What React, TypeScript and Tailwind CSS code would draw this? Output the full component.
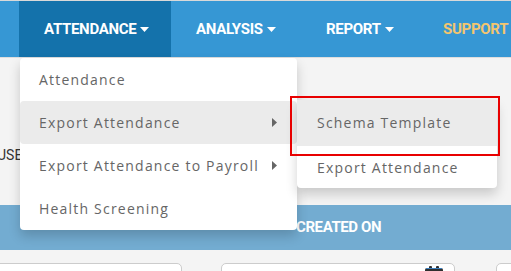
import React from "react";

const navFont = { fontFamily: "Roboto, 'Liberation Sans', sans-serif" };
const menuFont = { fontFamily: "'Open Sans', 'DejaVu Sans', sans-serif" };

function Caret() {
  return (
    <svg width="9" height="5" viewBox="0 0 9 5" className="shrink-0">
      <path d="M0 0h9L4.5 5z" fill="currentColor" />
    </svg>
  );
}

function RightCaret() {
  return (
    <svg width="5" height="9" viewBox="0 0 5 9" className="shrink-0">
      <path d="M0 0l5 4.5L0 9z" fill="currentColor" />
    </svg>
  );
}

const tabs = [
  { label: "ATTENDANCE", w: "w-[152px]", active: true },
  { label: "ANALYSIS", w: "w-[130px]" },
  { label: "REPORT", w: "w-[117px]" },
  { label: "SUPPORT", w: "w-[120px]", gold: true },
];

export default function App() {
  return (
    <div className="relative w-[511px] h-[271px] overflow-hidden bg-[#f4f4f4]">
      {/* Top nav */}
      <div className="h-[57px] border-t border-[#d9d9d9] bg-[#3697d4] flex pl-[19px]" style={navFont}>
        {tabs.map((t) => (
          <div
            key={t.label}
            className={`${t.w} shrink-0 h-full flex items-center gap-[4px] px-[25px] text-[15px] font-bold tracking-[-0.3px] ${
              t.active ? "bg-[#1472ab] text-white" : t.gold ? "text-[#f3c56f]" : "text-white"
            }`}
          >
            <span>{t.label}</span>
            <Caret />
          </div>
        ))}
      </div>
      <div className="h-px bg-[#dedede]" />

      {/* Page body behind the menu */}
      <div className="h-[147px] pt-[90px] text-[14px] leading-none text-[#333]" style={navFont}>
        <span className="-ml-[3px] inline-block">USER</span>
      </div>

      {/* Table header */}
      <div
        className="h-[45px] bg-[#73acd1] flex items-center pl-[296px] text-white text-[15px] font-bold tracking-[-0.4px]"
        style={navFont}
      >
        CREATED ON
      </div>

      {/* Filter inputs */}
      <div className="flex gap-[39px] pt-[13px] -ml-[10px]">
        <div className="w-[192px] h-[34px] shrink-0 rounded-[5px] border border-[#cccccc] bg-white" />
        <div className="w-[234px] h-[34px] shrink-0 rounded-[5px] border border-[#cccccc] bg-white flex justify-end pr-[11px] pt-[2px]">
          <svg width="18" height="16" viewBox="0 0 18 16">
            <rect x="0" y="2" width="18" height="14" rx="2" fill="#2f2f2f" />
            <rect x="4" y="0" width="3" height="4" rx="1" fill="#2f2f2f" />
            <rect x="11" y="0" width="3" height="4" rx="1" fill="#2f2f2f" />
            <rect x="1" y="2" width="16" height="1" fill="#3a7fc0" />
          </svg>
        </div>
        <div className="w-[80px] h-[34px] shrink-0 ml-[2px] rounded-[5px] border border-[#cccccc] bg-white" />
      </div>

      {/* Attendance dropdown */}
      <div
        className="absolute left-[20px] top-[58px] w-[277px] bg-white rounded-[4px] shadow-[0_6px_12px_rgba(0,0,0,0.18)] text-[14px] text-[#666] tracking-[1.2px]"
        style={menuFont}
      >
        <div className="h-[43px] flex items-center pl-[19px]">Attendance</div>
        <div className="h-[43px] flex items-center justify-between pl-[19px] pr-[20px] bg-[#ebebeb] rounded-[4px]">
          <span>Export Attendance</span>
          <RightCaret />
        </div>
        <div className="h-[43px] flex items-center justify-between pl-[19px] pr-[20px]">
          <span>Export Attendance to Payroll</span>
          <RightCaret />
        </div>
        <div className="h-[43px] flex items-center pl-[19px]">Health Screening</div>
      </div>

      {/* Export Attendance submenu */}
      <div
        className="absolute left-[297px] top-[100px] w-[200px] bg-white rounded-[4px] shadow-[0_6px_12px_rgba(0,0,0,0.18)] text-[14px] text-[#666] tracking-[1.2px]"
        style={menuFont}
      >
        <div className="h-[46px] flex items-center pl-[20px] pb-[1px] bg-[#ebebeb]">Schema Template</div>
        <div className="h-[42px] flex items-center pl-[20px]">Export Attendance</div>
      </div>

      {/* Highlight box */}
      <div className="absolute left-[290px] top-[96px] w-[210px] h-[60px] border-2 border-[#e80000]" />
    </div>
  );
}
